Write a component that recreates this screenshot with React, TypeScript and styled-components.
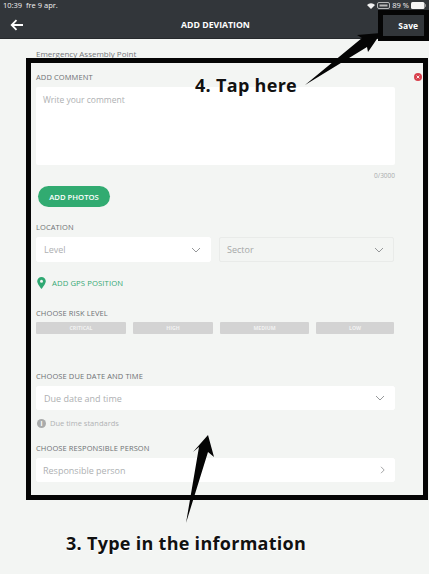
import React from "react";
import styled, { createGlobalStyle } from "styled-components";

const Global = createGlobalStyle`
  html, body { margin: 0; padding: 0; background: #ffffff; overflow: hidden; }
  * { box-sizing: border-box; }
`;

const Page = styled.div`
  position: relative;
  width: 429px;
  height: 574px;
  background: #f3f5f3;
  font-family: "Open Sans", "Liberation Sans", sans-serif;
  overflow: hidden;
`;

const Header = styled.header`
  height: 39px;
  background: #32363a;
  border-bottom: 1px solid #26292c;
  color: #fff;
  display: flex;
  flex-direction: column;
`;

const StatusBar = styled.div`
  height: 11px;
  padding: 0 3px 0 3px;
  display: flex;
  align-items: center;
  justify-content: space-between;
  font-size: 7.5px;
  line-height: 11px;
  color: #f2f2f2;
`;

const StatusRight = styled.div`
  display: flex;
  align-items: center;
  gap: 2px;
`;

const NavBar = styled.div`
  flex: 1;
  display: grid;
  grid-template-columns: 50px 1fr 50px;
  align-items: center;
  padding: 1px 0 0 10px;
`;

const Title = styled.div`
  text-align: center;
  font-size: 8.7px;
  font-weight: 700;
  padding-right: 8px;
`;

const SaveText = styled.div`
  font-size: 8.5px;
  font-weight: 700;
  text-align: right;
  padding-right: 11px;
`;

const Crumb = styled.div`
  padding: 10px 0 0 36px;
  height: 19px;
  font-size: 8px;
  line-height: 10px;
  color: #73777a;
`;

const Frame = styled.main`
  margin-left: 26px;
  width: 402px;
  height: 442px;
  border: 5px solid #050505;
  padding: 9px 28px 0 5px;
  position: relative;
`;

const Label = styled.div<{ $mt?: number }>`
  margin-top: ${(p) => p.$mt ?? 0}px;
  font-size: 7.5px;
  line-height: 10px;
  height: 10px;
  color: #6e7174;
  font-weight: 400;
  letter-spacing: 0.1px;
`;

const CloseDot = styled.span`
  position: absolute;
  top: 10px;
  right: 1px;
  width: 8px;
  height: 8px;
  border-radius: 50%;
  background: #d8404c;
  display: flex;
`;

const Comment = styled.div`
  margin-top: 5px;
  height: 78px;
  background: #fff;
  border-radius: 2px;
  padding: 7px 7px;
  font-size: 8.5px;
  line-height: 11px;
  color: #aeb0b2;
`;

const Counter = styled.div`
  margin-top: 6px;
  text-align: right;
  font-size: 6.5px;
  line-height: 9px;
  color: #a9abad;
`;

const PhotosButton = styled.div`
  margin: 6px 0 0 2px;
  width: 72px;
  height: 21px;
  border-radius: 11px;
  background: #31ab71;
  color: #fff;
  font-size: 7.7px;
  font-weight: 600;
  display: flex;
  align-items: center;
  justify-content: center;
`;

const Row = styled.div`
  margin-top: 5px;
  display: grid;
  grid-template-columns: 175px 175px;
  gap: 8px;
`;

const Field = styled.div<{ $disabled?: boolean; $pad?: number }>`
  height: 25px;
  border-radius: 2px;
  background: ${(p) => (p.$disabled ? "#f3f5f3" : "#fff")};
  border: 1px solid ${(p) => (p.$disabled ? "#e9ebe9" : "#fff")};
  padding: 0 9px 0 ${(p) => p.$pad ?? 7}px;
  display: flex;
  align-items: center;
  justify-content: space-between;
  font-size: 9px;
  color: ${(p) => (p.$disabled ? "#a6a8a8" : "#aeb0b2")};
`;

const FullField = styled(Field)`
  margin-top: 5px;
  height: 24px;
`;

const Gps = styled.div`
  margin-top: 15px;
  height: 12px;
  display: flex;
  align-items: center;
  gap: 6px;
  padding-left: 1px;
  font-size: 7.7px;
  font-weight: 500;
  color: #35a873;
  letter-spacing: 0.1px;
`;

const Chips = styled.div`
  margin-top: 4px;
  display: grid;
  grid-template-columns: 90px 80px 89px 78px;
  column-gap: 7px;
`;

const Chip = styled.div`
  height: 12px;
  background: #d3d3d3;
  border-radius: 1px;
  color: #f2f2f2;
  font-size: 5.2px;
  font-weight: 700;
  display: flex;
  align-items: center;
  justify-content: center;
`;

const Hint = styled.div`
  margin-top: 8px;
  height: 10px;
  display: flex;
  align-items: center;
  gap: 4px;
  padding-left: 1px;
  font-size: 7.5px;
  color: #b0b2b3;
`;

const InfoDot = styled.span`
  width: 9px;
  height: 9px;
  border-radius: 50%;
  background: #a9abab;
  color: #fff;
  font-size: 6.5px;
  font-weight: 700;
  line-height: 9px;
  text-align: center;
`;

const Caption = styled.div`
  margin-top: 31px;
  padding-left: 66px;
  font-size: 18px;
  line-height: 24px;
  font-weight: 700;
  letter-spacing: 0.28px;
  color: #111;
  text-shadow: 0 0 2px #fff, 0 1px 1px #fff;
  white-space: nowrap;
`;

const TapCaption = styled.div`
  position: absolute;
  left: 195px;
  top: 73px;
  font-size: 18px;
  line-height: 24px;
  font-weight: 700;
  letter-spacing: 0.3px;
  color: #111;
  text-shadow: 0 0 2px #fff, 0 1px 1px #fff;
  white-space: nowrap;
`;

const SaveFrame = styled.div`
  position: absolute;
  left: 378px;
  top: 10px;
  width: 51px;
  height: 31px;
  border: 5px solid #050505;
`;

const ArrowLayer = styled.svg`
  position: absolute;
  inset: 0;
  pointer-events: none;
`;

const Chevron = ({ c = "#8a8c8e" }: { c?: string }) => (
  <svg width="10" height="6" viewBox="0 0 10 6" fill="none" stroke={c} strokeWidth="0.9">
    <path d="M1 1l4 4 4-4" />
  </svg>
);

export default function App() {
  return (
    <Page>
      <Global />
      <Header>
        <StatusBar>
          <span>10:39&nbsp;&nbsp;fre 9 apr.</span>
          <StatusRight>
            <svg width="8" height="6" viewBox="0 0 8 6" fill="#f2f2f2">
              <path d="M0 2a5.6 5.6 0 0 1 8 0L4 6z" />
            </svg>
            <svg width="13" height="7" viewBox="0 0 13 7" fill="none">
              <rect x="0.5" y="0.5" width="12" height="6" rx="1.5" stroke="#d8d8d8" strokeWidth="0.8" />
              <rect x="2.5" y="2.5" width="8" height="2" fill="#b8b8b8" />
            </svg>
            <span>89 %</span>
            <svg width="15" height="7" viewBox="0 0 15 7">
              <rect x="0" y="0" width="13.5" height="7" rx="1.5" fill="#f5f5f5" />
              <rect x="14" y="2.2" width="1" height="2.6" fill="#999" />
            </svg>
          </StatusRight>
        </StatusBar>
        <NavBar>
          <svg width="14" height="12" viewBox="0 0 14 12" fill="none" stroke="#fff" strokeWidth="1.8">
            <path d="M13 6H2M6.5 1.2L1.7 6l4.8 4.8" />
          </svg>
          <Title>ADD DEVIATION</Title>
          <SaveText>Save</SaveText>
        </NavBar>
      </Header>
      <Crumb>Emergency Assembly Point</Crumb>
      <Frame>
        <Label>ADD COMMENT</Label>
        <CloseDot>
          <svg width="8" height="8" viewBox="0 0 8 8" stroke="#fff" strokeWidth="0.9">
            <path d="M2.6 2.6l2.8 2.8M5.4 2.6L2.6 5.4" />
          </svg>
        </CloseDot>
        <Comment>Write your comment</Comment>
        <Counter>0/3000</Counter>
        <PhotosButton>ADD PHOTOS</PhotosButton>
        <Label $mt={15}>LOCATION</Label>
        <Row>
          <Field>
            Level
            <Chevron />
          </Field>
          <Field $disabled>
            Sector
            <Chevron />
          </Field>
        </Row>
        <Gps>
          <svg width="9" height="12" viewBox="0 0 9 12">
            <path
              fillRule="evenodd"
              fill="#2fa872"
              d="M4.5 0A4.3 4.3 0 0 1 8.8 4.3C8.8 7 4.5 12 4.5 12S.2 7 .2 4.3A4.3 4.3 0 0 1 4.5 0zm0 2.8a1.5 1.5 0 1 0 0 3 1.5 1.5 0 0 0 0-3z"
            />
          </svg>
          ADD GPS POSITION
        </Gps>
        <Label $mt={19}>CHOOSE RISK LEVEL</Label>
        <Chips>
          <Chip>CRITICAL</Chip>
          <Chip>HIGH</Chip>
          <Chip>MEDIUM</Chip>
          <Chip>LOW</Chip>
        </Chips>
        <Label $mt={37}>CHOOSE DUE DATE AND TIME</Label>
        <FullField>
          Due date and time
          <Chevron />
        </FullField>
        <Hint>
          <InfoDot>i</InfoDot>
          Due time standards
        </Hint>
        <Label $mt={15}>CHOOSE RESPONSIBLE PERSON</Label>
        <FullField $pad={6}>
          Responsible person
          <svg width="5" height="8" viewBox="0 0 5 8" fill="none" stroke="#8a8c8e" strokeWidth="0.8">
            <path d="M1 .8L4.2 4 1 7.2" />
          </svg>
        </FullField>
      </Frame>
      <Caption>3. Type in the information</Caption>
      <TapCaption>4. Tap here</TapCaption>
      <SaveFrame />
      <ArrowLayer width="429" height="574" viewBox="0 0 429 574">
        <path d="M305 85L362 38 357 35 381 33 368 52 367 47z" fill="#050505" />
        <path d="M186 523L199 447 193 452 208 435 214 457 208 452z" fill="#050505" />
      </ArrowLayer>
    </Page>
  );
}
